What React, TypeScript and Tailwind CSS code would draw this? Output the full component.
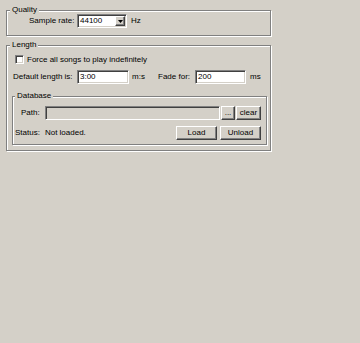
import React from "react";

const sunken =
  "border border-t-[#808080] border-l-[#808080] border-b-white border-r-white shadow-[inset_1px_1px_0_#404040,inset_-1px_-1px_0_#d4d0c8]";
const raised =
  "border border-t-white border-l-white border-b-[#404040] border-r-[#404040] shadow-[inset_-1px_-1px_0_#808080]";
const etched =
  "relative border border-[#808080] shadow-[inset_1px_1px_0_#ffffff,1px_1px_0_#ffffff]";

function Legend({ children, left }: { children: React.ReactNode; left: string }) {
  return (
    <span className={`absolute top-[-6px] ${left} px-[2px] bg-[#d4d0c8] leading-[10px]`}>
      {children}
    </span>
  );
}

function Btn({ children, w }: { children: React.ReactNode; w: string }) {
  return (
    <div className={`${raised} ${w} h-[14px] flex items-center justify-center bg-[#d4d0c8] leading-[10px]`}>
      {children}
    </div>
  );
}

export default function App() {
  return (
    <div
      className="w-[360px] h-[343px] bg-[#d4d0c8] text-black text-[8px] leading-[10px] overflow-hidden"
      style={{ fontFamily: '"Liberation Sans", Arial, sans-serif' }}
    >
      <div className="pl-[6px] pt-[10px] w-[271px]">
        {/* Quality */}
        <div className={`${etched} w-[265px] h-[26px]`}>
          <Legend left="left-[3px]">Quality</Legend>
          <div className="flex items-center pt-[3px]">
            <span className="pl-[22px] w-[70px]">Sample rate:</span>
            <div className={`${sunken} w-[50px] h-[14px] bg-white flex items-center justify-between`}>
              <span className="pl-[2px]">44100</span>
              <div className={`${raised} w-[10px] h-[10px] mr-[1px] flex items-center justify-center bg-[#d4d0c8]`}>
                <svg width="5" height="3" viewBox="0 0 5 3">
                  <path d="M0 0H5L2.5 3Z" fill="#000" />
                </svg>
              </div>
            </div>
            <span className="ml-[4px]">Hz</span>
          </div>
        </div>

        {/* Length */}
        <div className={`${etched} w-[265px] h-[106px] mt-[9px]`}>
          <Legend left="left-[3px]">Length</Legend>
          <div className="flex items-center mt-[9px] h-[9px] pl-[8px]">
            <div className={`${sunken} w-[9px] h-[9px] bg-white`} />
            <span className="ml-[3px]">Force all songs to play indefinitely</span>
          </div>
          <div className="flex items-center mt-[6px]">
            <span className="pl-[6px] w-[70px]">Default length is:</span>
            <div className={`${sunken} w-[52px] h-[14px] bg-white flex items-center`}>
              <span className="pl-[2px]">3:00</span>
            </div>
            <span className="ml-[3px] w-[26px]">m:s</span>
            <span className="w-[37px]">Fade for:</span>
            <div className={`${sunken} w-[51px] h-[14px] bg-white flex items-center`}>
              <span className="pl-[2px]">200</span>
            </div>
            <span className="ml-[4px]">ms</span>
          </div>

          {/* Database */}
          <div className={`${etched} ml-[5px] mt-[12px] w-[255px] h-[49px]`}>
            <Legend left="left-[2px]">Database</Legend>
            <div className="flex items-center mt-[9px] pr-[5px]">
              <span className="pl-[8px] w-[32px]">Path:</span>
              <div className={`${sunken} flex-1 h-[14px] bg-[#d4d0c8]`} />
              <div className="ml-[1px]">
                <Btn w="w-[14px]">...</Btn>
              </div>
              <div className="ml-[1px]">
                <Btn w="w-[25px]">clear</Btn>
              </div>
            </div>
            <div className="flex items-center mt-[6px] pr-[5px]">
              <span className="pl-[2px]">Status:</span>
              <span className="ml-[5px]">Not loaded.</span>
              <div className="ml-auto flex gap-[3px]">
                <Btn w="w-[41px]">Load</Btn>
                <Btn w="w-[41px]">Unload</Btn>
              </div>
            </div>
          </div>
        </div>
      </div>
    </div>
  );
}
